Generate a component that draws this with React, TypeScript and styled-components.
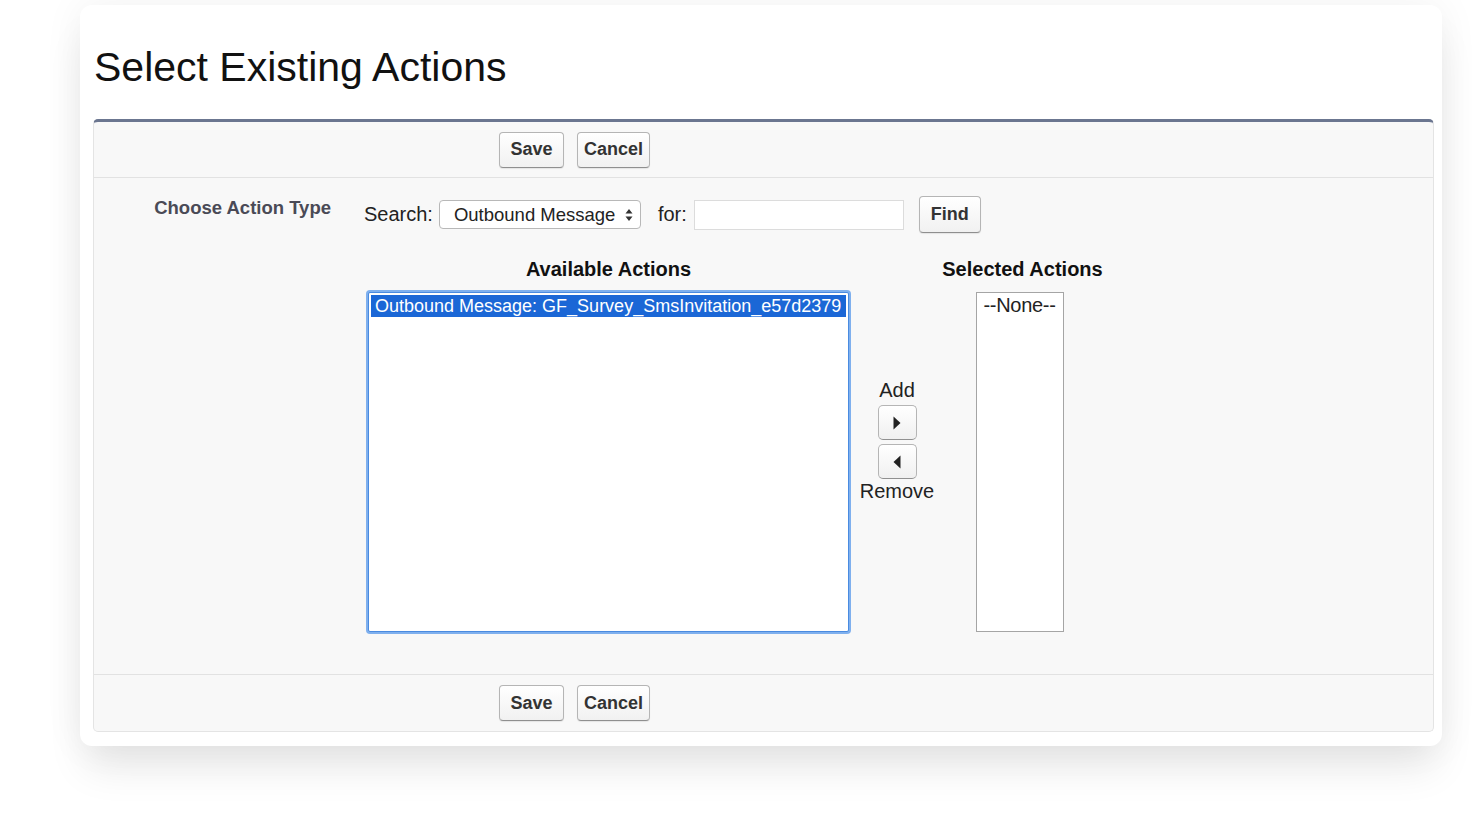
import React from "react";
import styled, { createGlobalStyle } from "styled-components";

const GlobalStyle = createGlobalStyle`
  html, body {
    margin: 0;
    padding: 0;
    background: #fff;
  }
  body {
    font-family: "Liberation Sans", Arial, Helvetica, sans-serif;
    color: #000;
  }
`;

const Page = styled.div`
  width: 1480px;
  height: 815px;
  padding: 5px 0 0 80px;
  box-sizing: border-box;
  overflow: hidden;
`;

const Card = styled.div`
  width: 1362px;
  box-sizing: border-box;
  background: #fff;
  border-radius: 12px;
  padding: 0 8px 14px 13px;
  box-shadow: 0 28px 40px -6px rgba(0, 0, 0, 0.09), 0 0 40px rgba(0, 0, 0, 0.06);
`;

const Title = styled.h1`
  margin: 0;
  padding: 38px 0 27px 1px;
  font-size: 41px;
  line-height: 49px;
  font-weight: 400;
  color: #111;
`;

const Panel = styled.div`
  background: #f8f8f8;
  border: 1px solid #e4e4e4;
  border-top: 3px solid #6b7690;
  border-radius: 5px;
`;

const ButtonBar = styled.div<{ $top?: boolean }>`
  display: flex;
  align-items: center;
  gap: 13px;
  height: ${(p) => (p.$top ? 55 : 56)}px;
  padding-left: 405px;
  ${(p) => (p.$top ? "border-bottom: 1px solid #e2e2e2;" : "border-top: 1px solid #e2e2e2;")}
`;

const Btn = styled.button<{ $h?: number; $w: number }>`
  width: ${(p) => p.$w}px;
  height: ${(p) => p.$h ?? 36}px;
  padding: 0;
  font-family: "Liberation Sans", Arial, sans-serif;
  font-size: 18px;
  font-weight: 700;
  color: #333;
  background: linear-gradient(#ffffff, #f1f1f1);
  border: 1px solid #b5b5b5;
  border-bottom-color: #8f8f8f;
  border-radius: 4px;
  box-shadow: 0 1px 1px rgba(0, 0, 0, 0.08);
  cursor: pointer;
`;

const Body = styled.div`
  display: flex;
  padding: 18px 0 42px 0;
`;

const Label = styled.div`
  width: 237px;
  flex: none;
  text-align: right;
  padding-top: 1px;
  font-size: 18.5px;
  line-height: 21px;
  font-weight: 700;
  color: #4a4a56;
`;

const Content = styled.div`
  margin-left: 33px;
  display: flex;
  flex-direction: column;
`;

const SearchRow = styled.div`
  display: flex;
  align-items: center;
  height: 37px;
  font-size: 20px;
  color: #222;
`;

const Select = styled.div`
  margin-left: 6px;
  width: 202px;
  height: 29px;
  box-sizing: border-box;
  display: flex;
  align-items: center;
  justify-content: space-between;
  padding: 0 7px 0 14px;
  background: #fff;
  border: 1px solid #b8b8b8;
  border-radius: 4px;
  font-size: 18.5px;
  color: #222;
`;

const Updown = styled.svg`
  width: 8px;
  height: 14px;
`;

const ForLabel = styled.span`
  margin-left: 17px;
`;

const Input = styled.div`
  margin-left: 7px;
  width: 210px;
  height: 30px;
  box-sizing: border-box;
  background: #fff;
  border: 1px solid #dcdcdc;
`;

const FindBtn = styled(Btn)`
  margin-left: 15px;
`;

const Lists = styled.div`
  display: flex;
  margin: 26px 0 0 4px;
`;

const Column = styled.div<{ $w: number; $ml?: number }>`
  width: ${(p) => p.$w}px;
  margin-left: ${(p) => p.$ml ?? 0}px;
  display: flex;
  flex-direction: column;
  align-items: center;
`;

const Heading = styled.div`
  font-size: 20px;
  line-height: 21px;
  font-weight: 700;
  color: #111;
  margin-bottom: 12px;
  white-space: nowrap;
`;

const ListBox = styled.div<{ $focus?: boolean; $w: number; $shift?: number }>`
  width: ${(p) => p.$w}px;
  height: 340px;
  margin-left: ${(p) => (p.$shift ?? 0) * 2}px;
  box-sizing: border-box;
  background: #fff;
  ${(p) =>
    p.$focus
      ? "border: 1px solid #4a8be0; box-shadow: 0 0 0 2px #7fb0ee; border-radius: 2px; padding: 2px;"
      : "border: 1px solid #a5a5a5; padding: 1px 0 0 0;"}
  font-size: 18px;
  line-height: 22px;
  color: #222;
  overflow: hidden;
`;

const Option = styled.div<{ $selected?: boolean }>`
  padding: 0 4px;
  white-space: nowrap;
  ${(p) => (p.$selected ? "background: #1b67d6; color: #fff;" : "")}
`;

const NoneOption = styled.div`
  text-align: center;
  font-size: 20px;
  letter-spacing: -0.3px;
`;

const Mover = styled.div`
  width: 78px;
  margin-left: 9px;
  padding-top: 121px;
  display: flex;
  flex-direction: column;
  align-items: center;
  font-size: 20px;
  line-height: 21px;
  color: #222;
`;

const ArrowBtn = styled.button<{ $mt: number }>`
  margin-top: ${(p) => p.$mt}px;
  width: 39px;
  height: 35px;
  padding: 0;
  display: flex;
  align-items: center;
  justify-content: center;
  background: linear-gradient(#ffffff, #f0f0f0);
  border: 1px solid #b5b5b5;
  border-bottom-color: #909090;
  border-radius: 5px;
  cursor: pointer;
`;

const MoverText = styled.span<{ $mt?: number }>`
  margin-top: ${(p) => p.$mt ?? 0}px;
`;

const Triangle = ({ left }: { left?: boolean }) => (
  <svg width="8" height="14" viewBox="0 0 8 14">
    <path d={left ? "M7.5 0.5 L0.5 7 L7.5 13.5 Z" : "M0.5 0.5 L7.5 7 L0.5 13.5 Z"} fill="#222" />
  </svg>
);

const Buttons = () => (
  <>
    <Btn $w={65}>Save</Btn>
    <Btn $w={73}>Cancel</Btn>
  </>
);

export default function App() {
  return (
    <>
      <GlobalStyle />
      <Page>
        <Card>
          <Title>Select Existing Actions</Title>
          <Panel>
            <ButtonBar $top>
              <Buttons />
            </ButtonBar>
            <Body>
              <Label>Choose Action Type</Label>
              <Content>
                <SearchRow>
                  <span>Search:</span>
                  <Select>
                    <span>Outbound Message</span>
                    <Updown viewBox="0 0 8 14">
                      <path d="M4 1 L7.5 5.5 L0.5 5.5 Z M4 13 L7.5 8.5 L0.5 8.5 Z" fill="#333" />
                    </Updown>
                  </Select>
                  <ForLabel>for:</ForLabel>
                  <Input />
                  <FindBtn $h={37} $w={62}>Find</FindBtn>
                </SearchRow>
                <Lists>
                  <Column $w={481}>
                    <Heading>Available Actions</Heading>
                    <ListBox $focus $w={481}>
                      <Option $selected>Outbound Message: GF_Survey_SmsInvitation_e57d2379</Option>
                    </ListBox>
                  </Column>
                  <Mover>
                    <span>Add</span>
                    <ArrowBtn $mt={4} title="Add">
                      <Triangle />
                    </ArrowBtn>
                    <ArrowBtn $mt={4} title="Remove">
                      <Triangle left />
                    </ArrowBtn>
                    <MoverText $mt={2}>Remove</MoverText>
                  </Mover>
                  <Column $w={163} $ml={5}>
                    <Heading>Selected Actions</Heading>
                    <ListBox $w={88} $shift={-3}>
                      <NoneOption>--None--</NoneOption>
                    </ListBox>
                  </Column>
                </Lists>
              </Content>
            </Body>
            <ButtonBar>
              <Buttons />
            </ButtonBar>
          </Panel>
        </Card>
      </Page>
    </>
  );
}
